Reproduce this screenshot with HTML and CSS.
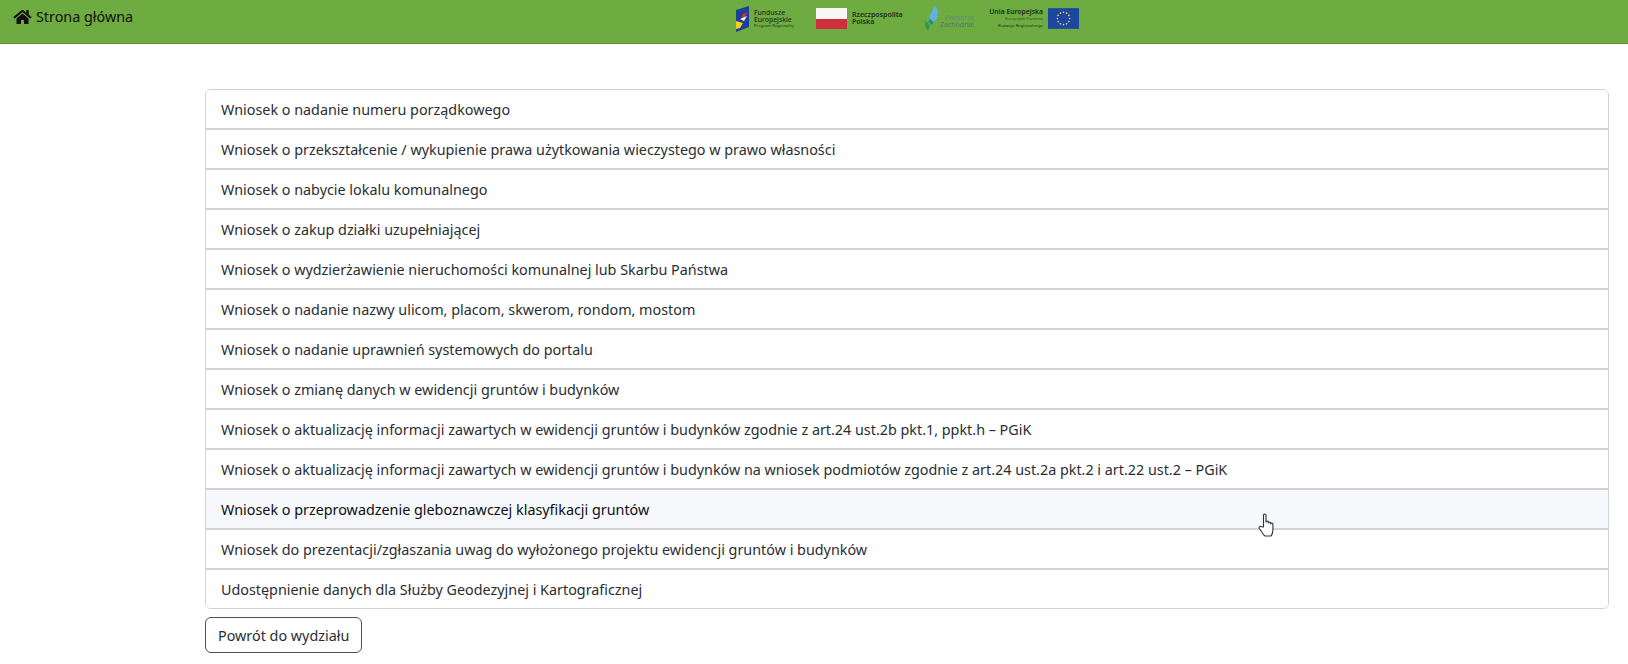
FILE: index.html
```html
<!DOCTYPE html>
<html lang="pl">
<head>
<meta charset="utf-8">
<title>Wnioski</title>
<link rel="stylesheet" href="styles.css">
</head>
<body>
<header class="topbar">
  <a class="home" href="#">
    <svg class="home-icon" viewBox="0 0 576 512" aria-hidden="true"><path d="M280.4 148.3 96 300.1V464a16 16 0 0 0 16 16l112.100-.3a16 16 0 0 0 15.900-16V368a16 16 0 0 1 16-16h64a16 16 0 0 1 16 16v95.600a16 16 0 0 0 16 16.100L464 480a16 16 0 0 0 16-16V300L295.700 148.300a12.200 12.200 0 0 0-15.300 0zM571.600 251.500 488 182.600V44.100a12 12 0 0 0-12-12h-56a12 12 0 0 0-12 12v72.600L318.500 43a48 48 0 0 0-61 0L4.300 251.500a12 12 0 0 0-1.600 16.900l25.500 31A12 12 0 0 0 45.200 301l235.200-193.700a12.200 12.200 0 0 1 15.300 0L530.900 301a12 12 0 0 0 16.900-1.600l25.500-31a12 12 0 0 0-1.700-16.900z"/></svg>
    <span>Strona główna</span>
  </a>
  <div class="logos">
    <div class="logo logo-fe">
      <svg class="fe-mark" viewBox="0 0 16 26" aria-hidden="true">
        <path fill="#1f3f94" d="M2 4 15 0v21L2 26z"/>
        <path fill="#f3d21f" d="M2 15l7 2-3 5-4 1z"/>
        <path fill="#d8304a" d="M8 9l5-3-2 5-3 1z"/>
        <path fill="#ffffff" d="M6 13l7-3-3 5z"/>
      </svg>
      <div class="fe-text"><b>Fundusze</b><b>Europejskie</b><small>Program Regionalny</small></div>
    </div>
    <div class="logo logo-pl">
      <div class="flag"><i class="flag-white"></i><i class="flag-red"></i></div>
      <div class="pl-text">Rzeczpospolita<br>Polska</div>
    </div>
    <div class="logo logo-pz">
      <svg class="pz-mark" viewBox="0 0 16 26" aria-hidden="true">
        <path fill="#5cb3e6" d="M11 0c4 4 4 9 0 15-4 2-6-1-5-6z"/>
        <path fill="#2f8f82" d="M6 13c3 1 4 4 2 6l-4-3z"/>
        <path fill="#2e9a55" d="M1 15l5 4-2 6-3-5z"/>
      </svg>
      <div class="pz-text"><span class="pz-top">Pomorze</span><span>Zachodnie</span></div>
    </div>
    <div class="logo logo-ue">
      <div class="ue-text"><b>Unia Europejska</b><small>Europejski Fundusz</small><small class="ue-dark">Rozwoju Regionalnego</small></div>
      <svg class="eu-flag" viewBox="0 0 30 20" aria-hidden="true">
        <rect width="30" height="20" fill="#1d46a0"/>
        <g fill="#e7dc6a">
          <circle cx="15" cy="4" r=".8"/><circle cx="18" cy="4.800" r=".8"/><circle cx="20.200" cy="7" r=".8"/><circle cx="21" cy="10" r=".8"/><circle cx="20.200" cy="13" r=".8"/><circle cx="18" cy="15.200" r=".8"/><circle cx="15" cy="16" r=".8"/><circle cx="12" cy="15.200" r=".8"/><circle cx="9.800" cy="13" r=".8"/><circle cx="9" cy="10" r=".8"/><circle cx="9.800" cy="7" r=".8"/><circle cx="12" cy="4.800" r=".8"/>
        </g>
      </svg>
    </div>
  </div>
</header>
<main class="content">
  <div class="list">
    <a class="item" href="#">Wniosek o nadanie numeru porządkowego</a>
    <a class="item" href="#">Wniosek o przekształcenie / wykupienie prawa użytkowania wieczystego w prawo własności</a>
    <a class="item" href="#">Wniosek o nabycie lokalu komunalnego</a>
    <a class="item" href="#">Wniosek o zakup działki uzupełniającej</a>
    <a class="item" href="#">Wniosek o wydzierżawienie nieruchomości komunalnej lub Skarbu Państwa</a>
    <a class="item" href="#">Wniosek o nadanie nazwy ulicom, placom, skwerom, rondom, mostom</a>
    <a class="item" href="#">Wniosek o nadanie uprawnień systemowych do portalu</a>
    <a class="item" href="#">Wniosek o zmianę danych w ewidencji gruntów i budynków</a>
    <a class="item" href="#">Wniosek o aktualizację informacji zawartych w ewidencji gruntów i budynków zgodnie z art.24 ust.2b pkt.1, ppkt.h – PGiK</a>
    <a class="item" href="#">Wniosek o aktualizację informacji zawartych w ewidencji gruntów i budynków na wniosek podmiotów zgodnie z art.24 ust.2a pkt.2 i art.22 ust.2 – PGiK</a>
    <a class="item item-hover" href="#">Wniosek o przeprowadzenie gleboznawczej klasyfikacji gruntów</a>
    <a class="item" href="#">Wniosek do prezentacji/zgłaszania uwag do wyłożonego projektu ewidencji gruntów i budynków</a>
    <a class="item" href="#">Udostępnienie danych dla Służby Geodezyjnej i Kartograficznej</a>
  </div>
  <a class="back" href="#">Powrót do wydziału</a>
</main>
<svg class="cursor" viewBox="0 0 18 24" aria-hidden="true"><path fill="#fff" stroke="#333" stroke-width="1.100" stroke-linejoin="round" d="M5.500 14V2.300c0-1.700 2.500-1.700 2.500 0V9c0-1.300 2.300-1.300 2.300 0v1c0-1.300 2.300-1.300 2.300 0v1c0-1.300 2.300-1.300 2.300 0v6c0 3-1.500 5.500-2 6H7c-1-.5-2-2-3.500-4.500L1.300 15.500c-.9-1.500.8-2.800 2-1.700z"/></svg>
</body>
</html>
```

FILE: styles.css
```css
* {
  box-sizing: border-box;
}

html,
body {
  margin: 0;
  height: 664px;
  overflow: hidden;
  background: #fff;
  font-family: "Noto Sans", "Open Sans", sans-serif;
  font-size: 14.350px;
  color: #2a2e33;
}

a {
  text-decoration: none;
}

.topbar {
  display: flex;
  align-items: center;
  height: 44px;
  padding: 0 0 0 13px;
  background: #6eac41;
  border-bottom: 1px solid #5f8f3c;
}

.home {
  display: flex;
  align-items: center;
  gap: 4px;
  width: 721px;
  color: #111;
  margin-top: -10px;
}

.home-icon {
  width: 19px;
  height: 16px;
  fill: #111;
}

.logos {
  display: flex;
  align-items: center;
  height: 28px;
  margin-top: -6px;
}

.logo {
  display: flex;
  align-items: center;
}

.logo small {
  display: block;
}

.fe-mark {
  width: 16px;
  height: 26px;
  margin-right: 4px;
}

.fe-text {
  width: 44px;
  color: #17351d;
  font-size: 6.800px;
  line-height: 7px;
}

.fe-text b {
  display: block;
  font-weight: 500;
}

.fe-text small {
  font-size: 4.200px;
  line-height: 6px;
}

.logo-pl {
  margin-left: 18px;
}

.flag {
  width: 31px;
  height: 21px;
  margin-right: 5px;
  display: flex;
  flex-direction: column;
}

.flag i {
  flex: 1;
}

.flag-white {
  background: #f6f6f4;
}

.flag-red {
  background: #cf2f3b;
}

.pl-text {
  width: 52px;
  color: #16301a;
  font-size: 7px;
  line-height: 6.500px;
  font-weight: 600;
}

.logo-pz {
  margin-left: 20px;
}

.pz-mark {
  width: 16px;
  height: 26px;
}

.pz-text {
  width: 32px;
  color: #4f7a66;
  font-size: 7px;
  line-height: 7px;
  margin-top: 4px;
}

.pz-text span {
  display: block;
}

.pz-top {
  padding-left: 5px;
  color: #5f9070;
}

.logo-ue {
  margin-left: 17px;
}

.ue-text {
  width: 54px;
  color: #16301a;
  text-align: right;
  font-size: 6.800px;
  line-height: 8px;
}

.ue-text b {
  display: block;
  font-weight: 600;
}

.ue-text small {
  font-size: 4.200px;
  line-height: 6.500px;
  color: #2a5a2c;
}

.ue-text .ue-dark {
  color: #16301a;
}

.eu-flag {
  width: 31px;
  height: 21px;
  margin-left: 5px;
}

.content {
  padding: 45px 19px 0 205px;
}

.list {
  display: flex;
  flex-direction: column;
  border: 1px solid #d3d3d6;
  border-radius: 6px;
  overflow: hidden;
}

.item {
  display: flex;
  align-items: center;
  height: 40px;
  padding: 0 15px;
  color: #2a2e33;
  background: #fff;
  border-top: 2px solid #d3d3d6;
}

.item:first-child {
  height: 38px;
  border-top: 0;
}

.item-hover {
  background: #f7f8fc;
  color: #0c0f12;
}

.back {
  display: inline-flex;
  align-items: center;
  height: 36px;
  margin-top: 8px;
  padding: 0 12px;
  color: #2a2e33;
  border: 1px solid #4e5257;
  border-radius: 6px;
}

.cursor {
  position: absolute;
  left: 1258px;
  top: 513px;
  width: 18px;
  height: 24px;
}
```
